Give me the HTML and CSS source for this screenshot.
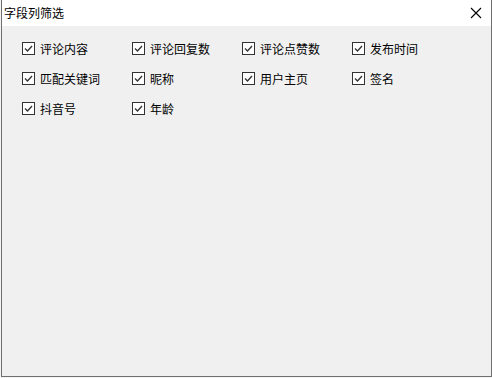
FILE: index.html
```html
<!DOCTYPE html>
<html>
<head>
    <title>字段列筛选</title>
    <link rel="stylesheet" href="styles.css">
</head>
<body>

<div class="window">
    <div class="title-bar">
        <span class="title">字段列筛选</span>
        <svg class="close" width="12" height="12" viewBox="0 0 12 12">
            <path d="M1 1 L11 11 M11 1 L1 11" stroke="#000" stroke-width="1.1" fill="none"/>
        </svg>
    </div>

    <div class="content">
        <div class="field-grid">
            <label class="field"><span class="box"><svg width="13" height="13" viewBox="0 0 13 13"><rect x="0.5" y="0.5" width="12" height="12" fill="#fff" stroke="#333"/><path d="M3 6.5 L5.5 9 L10 4" stroke="#333" stroke-width="1.3" fill="none"/></svg></span>评论内容</label>
            <label class="field"><span class="box"><svg width="13" height="13" viewBox="0 0 13 13"><rect x="0.5" y="0.5" width="12" height="12" fill="#fff" stroke="#333"/><path d="M3 6.5 L5.5 9 L10 4" stroke="#333" stroke-width="1.3" fill="none"/></svg></span>评论回复数</label>
            <label class="field"><span class="box"><svg width="13" height="13" viewBox="0 0 13 13"><rect x="0.5" y="0.5" width="12" height="12" fill="#fff" stroke="#333"/><path d="M3 6.5 L5.5 9 L10 4" stroke="#333" stroke-width="1.3" fill="none"/></svg></span>评论点赞数</label>
            <label class="field"><span class="box"><svg width="13" height="13" viewBox="0 0 13 13"><rect x="0.5" y="0.5" width="12" height="12" fill="#fff" stroke="#333"/><path d="M3 6.5 L5.5 9 L10 4" stroke="#333" stroke-width="1.3" fill="none"/></svg></span>发布时间</label>

            <label class="field"><span class="box"><svg width="13" height="13" viewBox="0 0 13 13"><rect x="0.5" y="0.5" width="12" height="12" fill="#fff" stroke="#333"/><path d="M3 6.5 L5.5 9 L10 4" stroke="#333" stroke-width="1.3" fill="none"/></svg></span>匹配关键词</label>
            <label class="field"><span class="box"><svg width="13" height="13" viewBox="0 0 13 13"><rect x="0.5" y="0.5" width="12" height="12" fill="#fff" stroke="#333"/><path d="M3 6.5 L5.5 9 L10 4" stroke="#333" stroke-width="1.3" fill="none"/></svg></span>昵称</label>
            <label class="field"><span class="box"><svg width="13" height="13" viewBox="0 0 13 13"><rect x="0.5" y="0.5" width="12" height="12" fill="#fff" stroke="#333"/><path d="M3 6.5 L5.5 9 L10 4" stroke="#333" stroke-width="1.3" fill="none"/></svg></span>用户主页</label>
            <label class="field"><span class="box"><svg width="13" height="13" viewBox="0 0 13 13"><rect x="0.5" y="0.5" width="12" height="12" fill="#fff" stroke="#333"/><path d="M3 6.5 L5.5 9 L10 4" stroke="#333" stroke-width="1.3" fill="none"/></svg></span>签名</label>

            <label class="field"><span class="box"><svg width="13" height="13" viewBox="0 0 13 13"><rect x="0.5" y="0.5" width="12" height="12" fill="#fff" stroke="#333"/><path d="M3 6.5 L5.5 9 L10 4" stroke="#333" stroke-width="1.3" fill="none"/></svg></span>抖音号</label>
            <label class="field"><span class="box"><svg width="13" height="13" viewBox="0 0 13 13"><rect x="0.5" y="0.5" width="12" height="12" fill="#fff" stroke="#333"/><path d="M3 6.5 L5.5 9 L10 4" stroke="#333" stroke-width="1.3" fill="none"/></svg></span>年龄</label>
        </div>
    </div>
</div>

</body>
</html>
```

FILE: styles.css
```css
/* simple dialog window */
html, body { margin: 0; padding: 0; }
body {
    background: #f4f4f4;
    font-family: "Noto Sans CJK SC", "Microsoft YaHei", sans-serif;
    font-size: 12px;
    color: #000;
}
.window {
    width: 489px; height: 376px; margin-left: 1px;
    border-left: 1px solid #6f6f6f; border-right: 1px solid #6f6f6f; border-bottom: 1px solid #6f6f6f;
    background: #f0f0f0;
    display: flex; flex-direction: column;
}
.title-bar {
    height: 26px; background: #fff;
    display: flex; align-items: center; justify-content: space-between;
    padding: 0 9px 0 2px;
}
.title { font-size: 12px; line-height: 14px; }
.close { display: block; }
.content { flex: 1; padding: 7px 0 0 20px; }
.field-grid {
    display: grid;
    grid-template-columns: repeat(4, 110px);
    grid-auto-rows: 30px;
}
.field { display: flex; align-items: center; gap: 5px; white-space: nowrap; }
.box { display: flex; width: 13px; height: 13px; }
```
